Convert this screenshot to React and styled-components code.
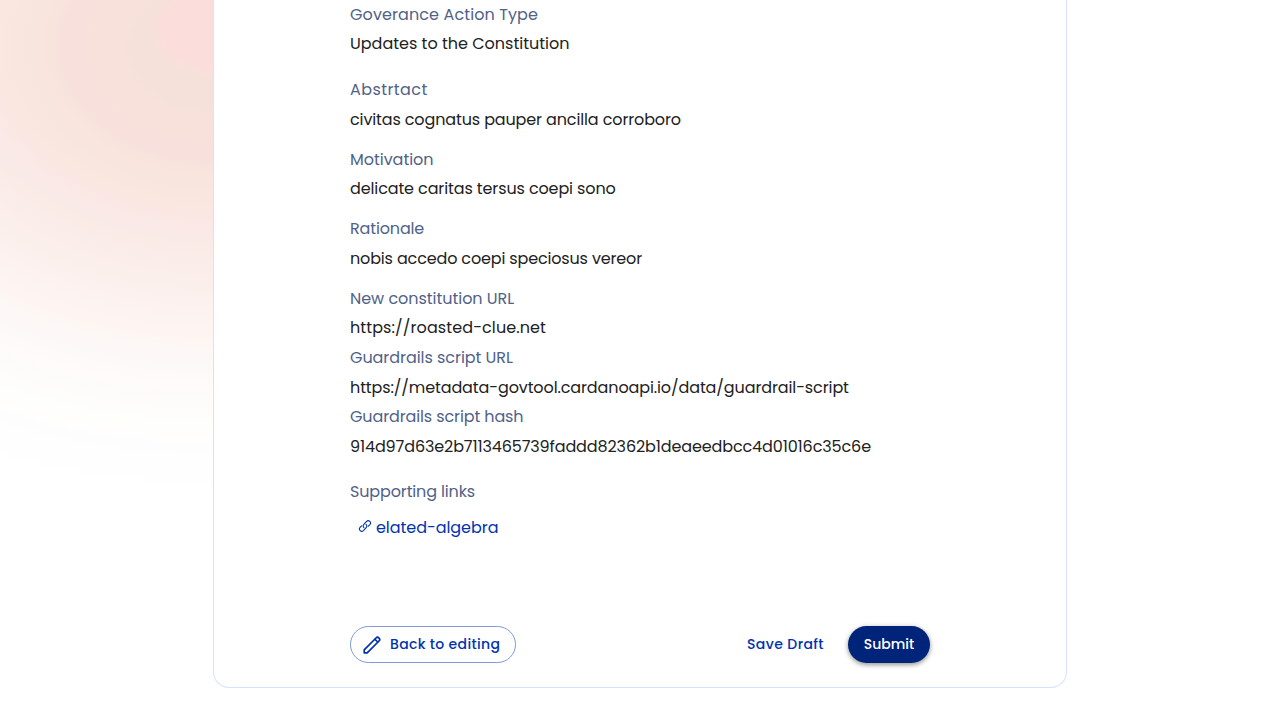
import React from "react";
import styled, { createGlobalStyle } from "styled-components";

const GlobalStyle = createGlobalStyle`
  *, *::before, *::after { box-sizing: border-box; }
  html, body { margin: 0; height: 100%; overflow: hidden; }
  body {
    background: #fff;
    color: #212121;
    font-family: Poppins, Inter, sans-serif;
    font-size: 16px;
  }
`;

const Page = styled.div`
  height: 720px;
  overflow: hidden;
  background:
    radial-gradient(ellipse 75px 47px at 230px 30px, #fbdedb 90%, rgba(251, 222, 219, 0) 106%),
    radial-gradient(
      ellipse 592px 440px at 215px 47px,
      #f6e1da 0%,
      #f6e1da 14%,
      #f8e1db 17%,
      #f9e1db 20.5%,
      #f8e0dc 22%,
      #f8e0dc 25%,
      #f8e3dd 27.5%,
      #f9e5dd 29%,
      #f8e5de 31%,
      #fae7df 36.5%,
      #fae7e4 38.5%,
      #fae9e6 41%,
      #faebe7 46%,
      #fbefec 54%,
      #fdf3f0 62%,
      #fef4f2 65%,
      #fdf8f5 68.5%,
      #fdf8f8 71.5%,
      #fefbfa 77%,
      #fdfcfb 81%,
      #fefefb 86%,
      #fffefd 89%,
      #fdfdfe 91%,
      #fefefe 94%,
      #fefefe 98%,
      #fff 100%
    );
`;

const Card = styled.main`
  width: 854px;
  height: 688px;
  margin: 0 auto;
  padding: 0 136px 24px;
  display: flex;
  flex-direction: column;
  background: #fff;
  border: 1px solid #d6e2ff;
  border-top: 0;
  border-radius: 0 0 16px 16px;
`;

const Details = styled.dl`
  margin: -0.2px 0 0;
  display: flex;
  flex-direction: column;
`;

const Field = styled.div`
  margin-bottom: ${(p) => p.$gap}px;
`;

const Label = styled.dt`
  line-height: 29.6px;
  white-space: nowrap;
  color: #506288;
  letter-spacing: ${(p) => p.$track}px;
`;

const Value = styled.dd`
  margin: 0;
  line-height: 29.6px;
  white-space: nowrap;
  letter-spacing: ${(p) => p.$track}px;
`;

const SupportLink = styled.a`
  display: flex;
  align-items: center;
  gap: 4px;
  height: 24px;
  margin-top: 8.6px;
  padding-left: 8px;
  color: #0033ad;
  letter-spacing: -0.05px;
  text-decoration: none;

  svg { margin-bottom: 3px; }
`;

const Actions = styled.footer`
  width: 580px;
  margin-top: auto;
  display: flex;
  align-items: center;
`;

const Button = styled.button`
  height: 37px;
  padding: 0 16px 1.5px;
  display: flex;
  align-items: center;
  justify-content: center;
  border: 0;
  border-radius: 100px;
  background: transparent;
  color: #0033ad;
  font: 500 14px/24px Poppins, Inter, sans-serif;
  letter-spacing: 0.4px;
  white-space: nowrap;
`;

const OutlinedButton = styled(Button)`
  width: 166px;
  margin-right: auto;
  padding: 0 0 1.5px 11px;
  justify-content: flex-start;
  gap: 8px;
  border: 1px solid #8099d6;
  letter-spacing: 0.34px;

  svg { position: relative; top: 1px; }
`;

const TextButton = styled(Button)`
  width: 109px;
  margin-right: 8px;
`;

const PrimaryButton = styled(Button)`
  width: 82px;
  background: #00247a;
  color: #fff;
  letter-spacing: 0;
  box-shadow: 0 2px 4px rgba(0, 0, 0, 0.3), 0 1px 6px rgba(0, 0, 0, 0.16);
`;

const LinkIcon = () => (
  <svg width="14" height="14" viewBox="0 0 14 14" fill="none" stroke="#0033ad" strokeWidth="1.1" strokeLinecap="round">
    <path d="M5.9 8.6a2.3 2.3 0 0 1-.1-3.3L8.6 2.4a2.3 2.3 0 0 1 3.3 3.2L10.3 7.2" />
    <path d="M8.1 5.4a2.3 2.3 0 0 1 .1 3.3L5.4 11.6a2.3 2.3 0 0 1-3.3-3.2L3.7 6.8" />
  </svg>
);

const PencilIcon = () => (
  <svg width="20" height="20" viewBox="0 0 20 20" fill="none" stroke="#0033ad" strokeWidth="1.7" strokeLinecap="round" strokeLinejoin="round">
    <path d="M2.2 17.8v-3L14 3a2.1 2.1 0 0 1 3 3L5.2 17.8z" />
    <path d="M13 4.3l2.7 2.7" />
  </svg>
);

const fields = [
  { label: "Goverance Action Type", lt: 0.1, value: "Updates to the Constitution", vt: 0, gap: 16 },
  { label: "Abstrtact", lt: 0.42, value: "civitas cognatus pauper ancilla corroboro", vt: -0.13, gap: 10.4 },
  { label: "Motivation", lt: -0.03, value: "delicate caritas tersus coepi sono", vt: -0.12, gap: 10.4 },
  { label: "Rationale", lt: -0.15, value: "nobis accedo coepi speciosus vereor", vt: -0.155, gap: 10.4 },
  { label: "New constitution URL", lt: -0.04, value: "https://roasted-clue.net", vt: 0.1, gap: 0 },
  { label: "Guardrails script URL", lt: -0.05, value: "https://metadata-govtool.cardanoapi.io/data/guardrail-script", vt: -0.11, gap: 0 },
  { label: "Guardrails script hash", lt: -0.12, value: "914d97d63e2b7113465739faddd82362b1deaeedbcc4d01016c35c6e", vt: -0.117, gap: 16 },
];

export default function App() {
  return (
    <Page>
      <GlobalStyle />
      <Card>
        <Details>
          {fields.map((f) => (
            <Field key={f.label} $gap={f.gap}>
              <Label $track={f.lt}>{f.label}</Label>
              <Value $track={f.vt}>{f.value}</Value>
            </Field>
          ))}
          <Field $gap={0}>
            <Label $track={-0.14}>Supporting links</Label>
            <SupportLink href="#">
              <LinkIcon />
              elated-algebra
            </SupportLink>
          </Field>
        </Details>
        <Actions>
          <OutlinedButton>
            <PencilIcon />
            Back to editing
          </OutlinedButton>
          <TextButton>Save Draft</TextButton>
          <PrimaryButton>Submit</PrimaryButton>
        </Actions>
      </Card>
    </Page>
  );
}
